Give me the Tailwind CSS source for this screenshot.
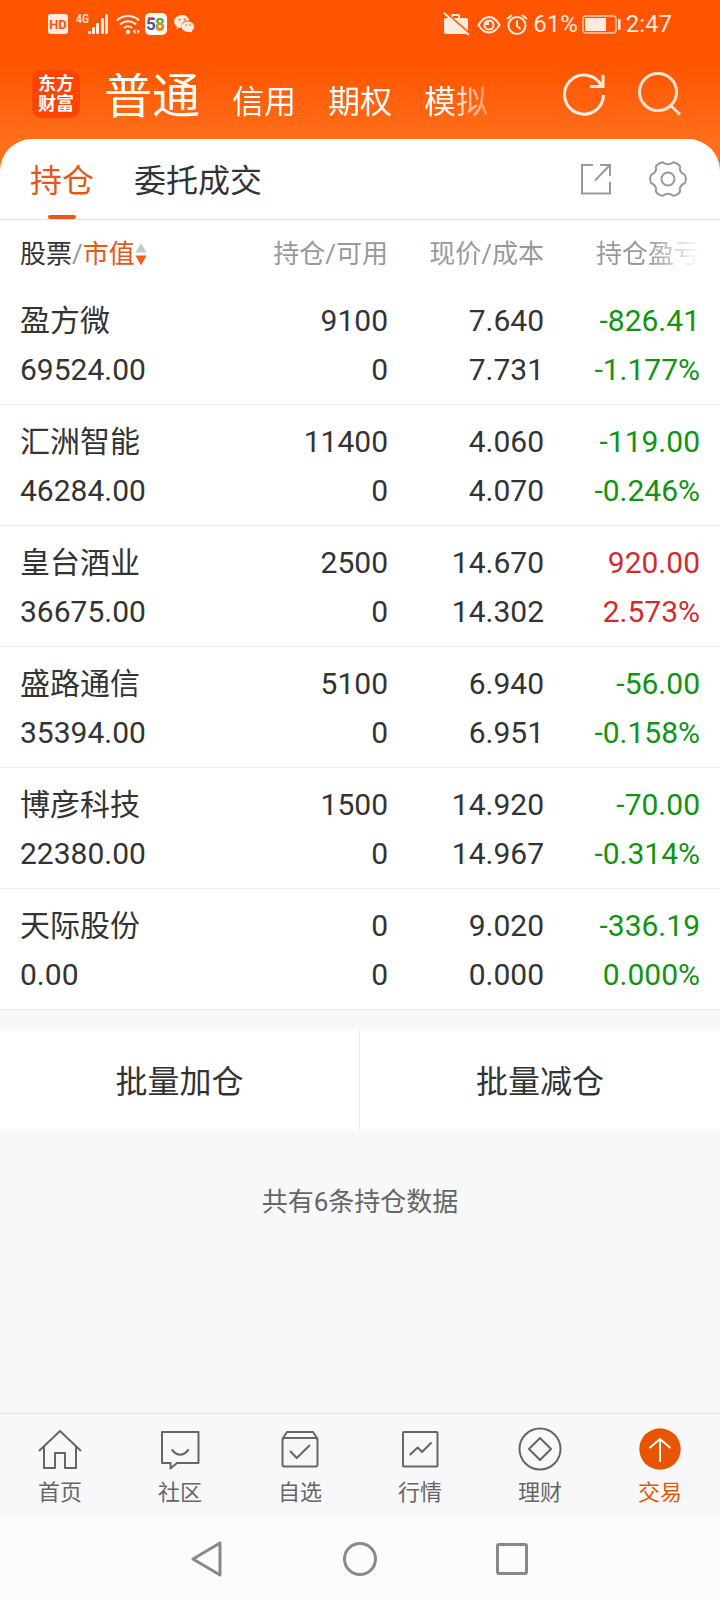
<!DOCTYPE html>
<html lang="zh-CN">
<head>
  <meta charset="UTF-8" />
  <meta name="viewport" content="width=device-width, initial-scale=1.0" />
  <title>持仓</title>
  <script src="https://cdn.jsdelivr.net/npm/@tailwindcss/browser@4"></script>
</head>
<body class="bg-[#f6f8fa] min-h-screen flex flex-col text-[#333] font-['Roboto','Noto_Sans_CJK_SC',sans-serif]">
  <div class="bg-linear-to-b from-[#ff5500] from-30% to-[#ff6f1a] to-65%">
    <!-- status bar -->
    <div class="flex items-center h-12 px-12 text-[#ffeae0]">
      <svg class="size-5 mr-2" viewBox="0 0 20 20"><rect width="20" height="20" rx="3" fill="currentColor"/><text x="10" y="15" text-anchor="middle" font-size="13" font-weight="700" fill="#ff5500">HD</text></svg>
      <svg class="w-8 h-6 mr-2" viewBox="0 0 32 24" fill="currentColor"><text x="0" y="11" font-size="12" font-weight="500" font-family="Roboto Condensed, Roboto">4G</text><rect x="12" y="19" width="3" height="3" rx="1"/><rect x="16" y="15" width="3" height="7" rx="1"/><rect x="20" y="11" width="3" height="11" rx="1"/><rect x="25" y="6" width="3" height="16" rx="1"/><rect x="29" y="2" width="3" height="20" rx="1"/></svg>
      <svg class="w-6 h-6 mr-1" viewBox="0 0 24 24" fill="none" stroke="currentColor" stroke-width="2"><path d="M1 8.500a16 16 0 0 1 22 0M4 12.500a11.500 11.500 0 0 1 16 0M8 16a6 6 0 0 1 8 0"/><circle cx="12" cy="20" r="2.200" fill="currentColor" stroke="none"/><path d="M19.500 17v5l-3-2.500zM21 17v5l3-2.500z" fill="currentColor" stroke="none"/></svg>
      <svg class="size-6 mr-1" viewBox="0 0 24 24"><rect x="1" y="1" width="22" height="22" rx="5" fill="#fffdf6"/><g font-size="17" font-weight="700" text-anchor="middle"><text x="7" y="18" fill="#2d62b8">5</text><text x="16" y="18" fill="#4fa43c">8</text></g><path d="M4 6.500h6" stroke="#e0323c" stroke-width="2.500"/><circle cx="16" cy="15" r="3" fill="none" stroke="#ef8a1c" stroke-width="2"/></svg>
      <svg class="size-6" viewBox="0 0 24 24" fill="currentColor"><path d="M10 3C5.500 3 2 6 2 9.500c0 2 1.200 3.700 3 5L4.300 17l3-1.500c.8.200 1.600.4 2.500.4C8.500 11 13 8 17.300 8.300 16.500 5 13.500 3 10 3z"/><path d="M16 9.500c-3.600 0-6.300 2.400-6.300 5.300S12.400 20 16 20c.7 0 1.400-.1 2-.3l2.400 1.200-.6-2c1.400-1 2.400-2.400 2.400-4.100 0-2.900-2.800-5.300-6.200-5.300z"/><g fill="#ff5500"><circle cx="7.500" cy="7.500" r="1"/><circle cx="12.500" cy="7.500" r="1"/><circle cx="14" cy="13" r=".8"/><circle cx="18" cy="13" r=".8"/></g></svg>
      <svg class="w-[26px] h-6 ml-auto mr-2" viewBox="0 0 26 24"><path d="M3 6h5V4q0-2 2-2h5q2 0 2 2v2h6q2 0 2 2v12q0 2-2 2H3q-2 0-2-2V8q0-2 2-2zm7-2v2h5V4z" fill="currentColor"/><path d="M2 0l25 22" stroke="#ff5500" stroke-width="2"/><path d="M1 1l25 22" stroke="currentColor" stroke-width="2"/></svg>
      <svg class="size-6 mr-1" viewBox="0 0 24 24" fill="none" stroke="currentColor" stroke-width="2"><path d="M1.500 13C5 7 9 5 12 5s7 2 10.500 8C19 19 15 20.500 12 20.500S5 19 1.500 13z"/><circle cx="12" cy="13" r="4.500"/><path d="M12 13V9.500A3.500 3.500 0 0 0 8.500 13z" fill="currentColor" stroke="none"/></svg>
      <svg class="size-6 mr-1" viewBox="0 0 24 24" fill="none" stroke="currentColor" stroke-width="2"><circle cx="12" cy="13.500" r="8.500"/><path d="M12 8.500v5.500l3.500 3M2 7l5-4M22 7l-5-4"/></svg>
      <span class="text-2xl mr-1">61%</span>
      <svg class="w-10 h-6 mr-1" viewBox="0 0 40 24"><rect x="1" y="4" width="33" height="17" rx="3" fill="none" stroke="currentColor" stroke-width="1.500" opacity=".8"/><rect x="3" y="6" width="21" height="13" rx="1" fill="currentColor"/><rect x="36" y="7" width="2.500" height="11" rx="1" fill="currentColor"/></svg>
      <span class="text-2xl">2:47</span>
    </div>

    <!-- account switcher -->
    <header class="flex items-center h-[91px] pl-8 pr-9 text-white">
      <div class="size-12 rounded-[10px] bg-[#ff4400] flex flex-col items-center justify-center text-lg leading-5 font-bold">
        <span>东方</span><span>财富</span>
      </div>
      <nav class="flex items-baseline gap-8 mt-3 ml-6 text-[32px] [mask-image:linear-gradient(to_right,#000_89%,transparent_106%)]">
        <a href="#" class="text-5xl">普通</a>
        <a href="#">信用</a>
        <a href="#">期权</a>
        <a href="#">模拟</a>
      </nav>
      <button type="button" aria-label="刷新" class="ml-auto mr-7">
        <svg class="size-12" viewBox="0 0 48 48" fill="none" stroke="#ffeee0" stroke-width="3"><path d="M43.500 25A19.500 19.500 0 1 1 41.500 16M43 5v11.500H30"/></svg>
      </button>
      <button type="button" aria-label="搜索">
        <svg class="size-12" viewBox="0 0 48 48" fill="none" stroke="#ffe3d0" stroke-width="3"><circle cx="22" cy="22" r="18.500"/><path d="M34.500 35.500L44 44.500"/></svg>
      </button>
    </header>

    <!-- tabs -->
    <div class="flex h-[81px] pl-[30px] pr-8 bg-white rounded-t-[32px] border-b border-[#dedede] text-[32px]">
      <nav class="flex gap-10">
        <a href="#" class="flex flex-col items-center justify-between text-[#e4581a]"><span class="leading-[84px] h-[76px]">持仓</span><span class="w-7 h-1 rounded-full bg-[#e4581a]"></span></a>
        <a href="#" class="leading-[84px]">委托成交</a>
      </nav>
      <div class="flex items-center gap-9 ml-auto text-[#999]">
        <button type="button" aria-label="分享"><svg class="size-8" viewBox="0 0 32 32" fill="none" stroke="currentColor" stroke-width="2"><path d="M13 2H2v28.500h28V19M20 2H30v11M15 17.500L30 2"/></svg></button>
        <button type="button" aria-label="设置"><svg class="size-10" viewBox="-20 -20 40 40" fill="none" stroke="currentColor" stroke-width="2" stroke-linejoin="round"><path d="M17.150-3.960Q18.800 0 17.150 3.960Q10.800 6.250 12 12.870Q9.400 16.300 5.150 16.830Q0 12.500-5.150 16.830Q-9.400 16.300-12 12.870Q-10.800 6.250-17.150 3.960Q-18.800 0-17.150-3.960Q-10.800-6.250-12-12.870Q-9.400-16.300-5.150-16.830Q0-12.500 5.150-16.830Q9.400-16.300 12-12.870Q10.800-6.250 17.150-3.960Z"/><circle r="6.500"/></svg></button>
      </div>
    </div>
  </div>

  <table class="w-full table-fixed bg-white text-right">
    <colgroup><col /><col class="w-39" /><col class="w-39" /><col class="w-44" /></colgroup>
    <thead>
      <tr class="h-16 text-[26px] text-[#999]">
        <th class="pt-1 pl-5 text-left font-normal">
          <button type="button" class="flex items-center"><span class="text-[#333]">股票</span>/<span class="text-[#e4581a]">市值</span><svg class="w-3 h-6" viewBox="0 0 12 24"><path d="M6 1l5.500 9.500H.5z" fill="#c8c8c8"/><path d="M6 23.500L.5 13.500h11z" fill="#ec6020"/></svg></button>
        </th>
        <th class="pt-1 font-normal">持仓/可用</th>
        <th class="pt-1 font-normal">现价/成本</th>
        <th class="pt-1 pr-5 font-normal"><span class="[mask-image:linear-gradient(to_right,#000_50%,transparent_100%)]">持仓盈亏</span></th>
      </tr>
    </thead>
    <tbody id="positions" class="text-[30px] leading-[49px]"></tbody>
  </table>

  <div class="grid grid-cols-2 mt-5 bg-white text-[32px]">
    <button type="button" class="h-25 pt-1 border-r border-[#ebebeb]">批量加仓</button>
    <button type="button" class="h-25 pt-1">批量减仓</button>
  </div>
  <p id="total" class="mt-12 text-center text-[26px] leading-12 text-[#666]"></p>

  <!-- bottom tab bar -->
  <nav class="grid grid-cols-6 h-[105px] pt-[11px] mt-auto bg-[#f8f8fa] border-t border-[#e2e3e5] text-[22px] leading-10 text-[#666]">
    <a href="#" class="flex flex-col items-center">
      <svg class="size-12" viewBox="0 0 48 48" fill="none" stroke="currentColor" stroke-width="2" stroke-linejoin="round"><path d="M3 26L24 6l21 20M8 22v21h11V28h10v15h11V22"/></svg>首页</a>
    <a href="#" class="flex flex-col items-center">
      <svg class="size-12" viewBox="0 0 48 48" fill="none" stroke="currentColor" stroke-width="2" stroke-linejoin="round"><path d="M6 7h36.500v31H21l-6.500 5.500V38H6zM15.700 24.500q8.500 10.500 17 0"/></svg>社区</a>
    <a href="#" class="flex flex-col items-center">
      <svg class="size-12" viewBox="0 0 48 48" fill="none" stroke="currentColor" stroke-width="2" stroke-linejoin="round"><rect x="6.500" y="13" width="35" height="28.500" rx="2"/><path d="M6.500 14l4.500-7h26l4.500 7M14 26l6.700 7L34 20"/></svg>自选</a>
    <a href="#" class="flex flex-col items-center">
      <svg class="size-12" viewBox="0 0 48 48" fill="none" stroke="currentColor" stroke-width="2" stroke-linejoin="round"><rect x="7" y="7" width="34.500" height="34.500" rx="1"/><path d="M13.700 30l8-7.500 4.300 4.500 9.500-9.500"/></svg>行情</a>
    <a href="#" class="flex flex-col items-center">
      <svg class="size-12" viewBox="0 0 48 48" fill="none" stroke="currentColor" stroke-width="2" stroke-linejoin="round"><circle cx="24" cy="24" r="20.500"/><path d="M24 13l11 11-11 11-11-11z"/></svg>理财</a>
    <a href="#" class="flex flex-col items-center text-[#e85500]">
      <svg class="size-12" viewBox="0 0 48 48" fill="none" stroke="#fff" stroke-width="2"><circle cx="24" cy="24" r="20.700" fill="#e85500" stroke="none"/><path d="M24 37V14M13.500 23L24 14l10.500 9"/></svg>交易</a>
  </nav>

  <!-- system navigation -->
  <div class="flex items-center justify-center gap-28 h-[82px] bg-[#fcfcfc] text-[#888]">
    <button type="button" aria-label="返回"><svg class="size-10" viewBox="0 0 40 40" fill="none" stroke="currentColor" stroke-width="3" stroke-linejoin="round"><path d="M5 20l27-16v32z"/></svg></button>
    <button type="button" aria-label="主屏幕"><svg class="size-10" viewBox="0 0 40 40" fill="none" stroke="currentColor" stroke-width="3"><circle cx="20" cy="20" r="15.500"/></svg></button>
    <button type="button" aria-label="最近任务"><svg class="size-10" viewBox="0 0 40 40" fill="none" stroke="currentColor" stroke-width="3"><rect x="5.500" y="5.500" width="29" height="29" rx="1.500"/></svg></button>
  </div>

<script>
  const positions = [
    { name: '盈方微', value: '69524.00', held: 9100, free: 0, price: '7.640', cost: '7.731', pl: '-826.41', pct: '-1.177%' },
    { name: '汇洲智能', value: '46284.00', held: 11400, free: 0, price: '4.060', cost: '4.070', pl: '-119.00', pct: '-0.246%' },
    { name: '皇台酒业', value: '36675.00', held: 2500, free: 0, price: '14.670', cost: '14.302', pl: '920.00', pct: '2.573%' },
    { name: '盛路通信', value: '35394.00', held: 5100, free: 0, price: '6.940', cost: '6.951', pl: '-56.00', pct: '-0.158%' },
    { name: '博彦科技', value: '22380.00', held: 1500, free: 0, price: '14.920', cost: '14.967', pl: '-70.00', pct: '-0.314%' },
    { name: '天际股份', value: '0.00', held: 0, free: 0, price: '9.020', cost: '0.000', pl: '-336.19', pct: '0.000%' }
  ];
  document.getElementById('positions').innerHTML = positions.map(p => `
    <tr class="border-b border-[#ebebeb]">
      <td class="pt-3 pb-2.5 pl-5 text-left"><div>${p.name}</div><div>${p.value}</div></td>
      <td class="pt-3 pb-2.5"><div>${p.held}</div><div>${p.free}</div></td>
      <td class="pt-3 pb-2.5"><div>${p.price}</div><div>${p.cost}</div></td>
      <td class="pt-3 pb-2.5 pr-5 ${p.pl.startsWith('-') ? 'text-[#129312]' : 'text-[#cf2d2d]'}"><div>${p.pl}</div><div>${p.pct}</div></td>
    </tr>`).join('');
  document.getElementById('total').textContent = `共有${positions.length}条持仓数据`;
</script>
</body>
</html>
